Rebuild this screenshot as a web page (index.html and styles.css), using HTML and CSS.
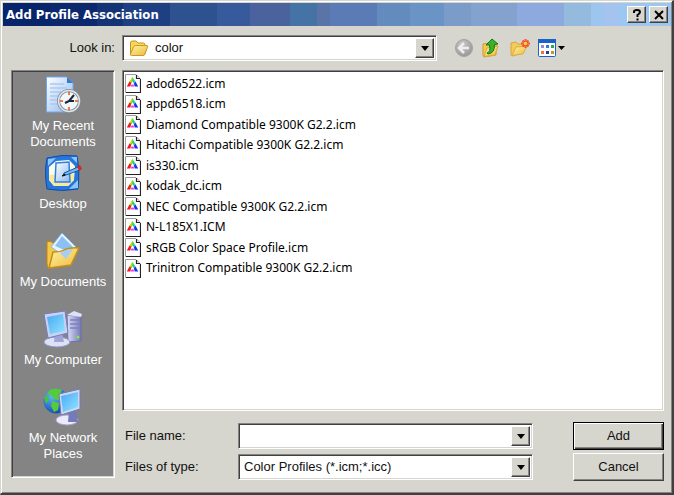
FILE: index.html
```html
<!DOCTYPE html>
<html lang="en">
<head>
<meta charset="utf-8">
<title>Add Profile Association</title>
<link rel="stylesheet" href="styles.css">
</head>
<body>
<svg class="defs" aria-hidden="true">
  <defs>
    <linearGradient id="gold" x1="0" y1="0" x2="1" y2="1"><stop offset="0" stop-color="#fff3a8"/><stop offset="1" stop-color="#eeb938"/></linearGradient>
    <linearGradient id="screen" x1="0" y1="0" x2="1" y2="1"><stop offset="0" stop-color="#4aa8f4"/><stop offset="1" stop-color="#8fe4ff"/></linearGradient>
    <linearGradient id="paper" x1="0" y1="0" x2="1" y2="1"><stop offset="0" stop-color="#ffffff"/><stop offset="1" stop-color="#8db9f0"/></linearGradient>
    <linearGradient id="case" x1="0" y1="0" x2="1" y2="0"><stop offset="0" stop-color="#dcdff8"/><stop offset="1" stop-color="#7479b8"/></linearGradient>
    <radialGradient id="globe" cx=".35" cy=".3" r=".8"><stop offset="0" stop-color="#62b8ff"/><stop offset="1" stop-color="#0a3fae"/></radialGradient>
    <radialGradient id="grey" cx=".4" cy=".3" r=".8"><stop offset="0" stop-color="#c9c9c9"/><stop offset="1" stop-color="#929292"/></radialGradient>
    <symbol id="profile" viewBox="0 0 16 19">
      <path d="M.5.5H11L15.500 5V18.500H.5z" fill="#fff" stroke="#9a9a9a"/>
      <path d="M11.500 1V4.500H15M15.500 5V18.500H1" fill="none" stroke="#222" stroke-width="1.200"/>
      <path d="M7.500 3L10.500 8L7.500 9L4.500 8z" fill="#12d832"/>
      <path d="M7.500 3L4.500 8L5.800 8.500L7.500 6z" fill="#e8d800"/>
      <path d="M4.500 7.500L7 9L5 12.500H1.800z" fill="#f01818"/>
      <path d="M10.500 7.500L13.200 12.500H10L8 9z" fill="#1830f0"/>
      <path d="M8 5L10.500 8L9 9z" fill="#18d8d0"/>
      <path d="M7.500 9L9.500 12.500H5.500z" fill="#e838e8"/>
      <path d="M7.500 7L9.500 10.500H5.500z" fill="#fff"/>
    </symbol>
  </defs>
</svg>
<main class="dialog">
  <header class="titlebar">
    <h1>Add Profile Association</h1>
    <button class="caption" type="button" aria-label="Help"><svg width="10" height="12" viewBox="0 0 10 12"><path d="M2 4V2.500Q2 1 5 1T8 3Q8 4.500 5.500 6V8M5.500 9.500V11.500" fill="none" stroke="#000" stroke-width="2"/></svg></button>
    <button class="caption close" type="button" aria-label="Close"><svg width="10" height="10" viewBox="0 0 10 10"><path d="M1 1L9 9M9 1L1 9" stroke="#000" stroke-width="2"/></svg></button>
  </header>

  <form class="content">
    <label class="lookin-label" for="lookin">Look in:</label>
    <div class="lookin-row">
      <div class="combo">
        <svg class="folder" width="20" height="17" viewBox="0 0 20 17"><path d="M1.500 14V3Q1.500 1 3.500 1H7L9 3H14.500Q16 3 16 5V14z" fill="#f8d75e" stroke="#c49322"/><path d="M2.500 15.500Q1 15.500 1.500 14L4.500 7Q5 5.500 6.500 5.500H18Q19 5.500 18.500 7L16 14Q15.500 15.500 14 15.500z" fill="url(#gold)" stroke="#c99a22"/></svg>
        <select id="lookin"><option>color</option></select>
        <span class="drop" aria-hidden="true"></span>
      </div>
      <div class="tools">
        <button class="tool" type="button" aria-label="Back"><svg width="20" height="20" viewBox="0 0 20 20"><circle cx="10" cy="10" r="8.500" fill="url(#grey)" stroke="#a2a2a2"/><path d="M10 5L5 10L10 15M5.500 10H15" fill="none" stroke="#eee" stroke-width="2.500"/></svg></button>
        <button class="tool" type="button" aria-label="Up one level"><svg width="20" height="20" viewBox="0 0 20 20"><path d="M1 17V6L6 5L8 7L14 6V17L2 19z" fill="#f4c94a" stroke="#cf9b2a"/><path d="M2 18.500L5 10L16 8L13 17z" fill="url(#gold)" stroke="#dba936"/><path d="M5 15Q9 14 7.500 7H4L10 1L16 6L12.500 6.500Q13 15 6 16z" fill="#38b22c" stroke="#16791a"/></svg></button>
        <button class="tool" type="button" aria-label="Create new folder"><svg width="20" height="20" viewBox="0 0 20 20"><path d="M1 17V5L6 4L8 6H14V14L3 18z" fill="#f4cb56" stroke="#d9a63c"/><path d="M2 17.500L6 9L17 8L13 16z" fill="url(#gold)" stroke="#dfad42"/><path d="M15.500 1V10M11 5.500H20M12.500 2.500L18.500 8.500M18.500 2.500L12.500 8.500" stroke="#f0582a" stroke-width="2"/><circle cx="15.500" cy="5.500" r="1.800" fill="#ffcd56"/></svg></button>
        <button class="tool" type="button" aria-label="View menu"><svg width="28" height="20" viewBox="0 0 28 20"><rect x=".5" y="1.500" width="17" height="17" rx="1" fill="#fff" stroke="#1763c8"/><path d="M0 1H18V5H0z" fill="#1763c8"/><path d="M3 7h3v3H3z" fill="#9b8ad0"/><path d="M8 7h3v3H8z" fill="#3978d4"/><path d="M13 7h3v3h-3z" fill="#3aa24d"/><path d="M3 13h3v3H3z" fill="#ef704a"/><path d="M8 13h3v3H8z" fill="#263e9a"/><path d="M13 13h3v3h-3z" fill="#c49a24"/><path d="M20 8H27L23.500 12z" fill="#000"/></svg></button>
      </div>
    </div>

    <nav class="places">
      <a href="#recent"><svg width="36" height="38" viewBox="0 0 36 38"><path d="M1.500 1H22L28 7V36H1.500z" fill="url(#paper)" stroke="#72a6ec"/><path d="M22 1V7H28z" fill="#2e7be0"/><path d="M5 8H19M5 12H22M5 16H16M5 20H13M5 24H12M5 28H13" stroke="#a9caf2" stroke-width="1.500"/><circle cx="24" cy="25" r="10.500" fill="#f2f7fb" stroke="#7e8896" stroke-width="3"/><circle cx="24" cy="25" r="10.500" fill="none" stroke="#dfe4ea" stroke-width="1.500"/><path d="M24 16V19M24 31V34M15 25H18M30 25H33" stroke="#ee7a3c" stroke-width="2"/><path d="M29 19L24 25L29 25M24 25L20 27" fill="none" stroke="#1b2636" stroke-width="2"/></svg><span>My Recent Documents</span></a>
      <a href="#desktop"><svg width="38" height="38" viewBox="0 0 38 38"><path d="M3 4Q18 0 33 2Q36 17 34 35Q18 38 3 35Q0 18 3 4z" fill="#2676dc" stroke="#0c4cae"/><path d="M4 5L12 4L4 12zM25 35L34 26V34zM27 3L33 3V9z" fill="#8ac6ff"/><path d="M12 7L25 6L31 12L30 26L24 32L10 32L5 26V13z" fill="#fdfcec"/><path d="M5 21L30 20V26L24 32H10L5 26z" fill="#f9e9a0"/><path d="M12 9L25 8L26 28L11 28z" fill="url(#paper)" stroke="#2f82da" stroke-width="1.500"/><path d="M20 19L34 13L36 16L22 21L19 22z" fill="#72bbf4" stroke="#17569e"/><path d="M33 12L36 11L38 15L35 17z" fill="#d5281c"/><path d="M18 22L21 20V21z" stroke="#111"/></svg><span>Desktop</span></a>
      <a href="#documents"><svg width="36" height="38" viewBox="0 0 36 38"><path d="M2 10Q5 8 8 11L13 12L31 15L26 33L4 36Q2 35 2 32z" fill="#f6c944" stroke="#be8712"/><path d="M17 1L31 15L24 27L6 15z" fill="#e8f4ff" stroke="#83b9ed"/><path d="M17 4L28 15L24 20L10 14z" fill="#8cbff3"/><path d="M4 36L8 20Q16 20 19 18Q26 15 34 16L26 33z" fill="url(#gold)" stroke="#c48e18" stroke-width="1.500"/><path d="M15 21L21 27L28 17Q21 17 19 19z" fill="#a6cdf2"/></svg><span>My Documents</span></a>
      <a href="#computer"><svg width="40" height="38" viewBox="0 0 40 38"><path d="M24 5L38 6V31L25 32z" fill="url(#case)" stroke="#6b70aa"/><path d="M24 5L31 1L39 4L38 7z" fill="#dee1fa"/><path d="M27 10L36 10M27 14L36 14M27 18H36" stroke="#7c82ba" stroke-width="1.500"/><circle cx="35" cy="27" r="1.500" fill="#83ec3f"/><ellipse cx="14" cy="32" rx="13" ry="5" fill="#dce1f6" stroke="#8f97cb"/><path d="M12 23H19L21 32H11z" fill="#9da5da"/><path d="M1 4L22 1L25 23L5 28z" fill="#cbd1f4" stroke="#777eb8"/><path d="M4 7L20 4L22 21L7 24z" fill="url(#screen)"/></svg><span>My Computer</span></a>
      <a href="#network"><svg width="40" height="38" viewBox="0 0 40 38"><circle cx="13" cy="13" r="12.500" fill="url(#globe)"/><path d="M7 2Q13-1 19 2L17 6L20 10L15 12L11 11L8 7L4 6zM9 13L16 15L15 22L11 24L8 18z" fill="#54cc38"/><path d="M1 9L5 7L6 12L3 16z" fill="#4ac03b"/><ellipse cx="24" cy="32" rx="11" ry="5" fill="#eceafa" stroke="#a4a3d0"/><path d="M26 23H33L35 34H25z" fill="#747bb9"/><path d="M16 6L37 1V21L18 27z" fill="#cfd8f7" stroke="#737bad"/><path d="M18 8L35 4V19L20 24z" fill="url(#screen)"/></svg><span>My Network Places</span></a>
    </nav>

    <ul class="files">
      <li><svg><use href="#profile"/></svg>adod6522.icm</li>
      <li><svg><use href="#profile"/></svg>appd6518.icm</li>
      <li><svg><use href="#profile"/></svg>Diamond Compatible 9300K G2.2.icm</li>
      <li><svg><use href="#profile"/></svg>Hitachi Compatible 9300K G2.2.icm</li>
      <li><svg><use href="#profile"/></svg>is330.icm</li>
      <li><svg><use href="#profile"/></svg>kodak_dc.icm</li>
      <li><svg><use href="#profile"/></svg>NEC Compatible 9300K G2.2.icm</li>
      <li><svg><use href="#profile"/></svg>N-L185X1.ICM</li>
      <li><svg><use href="#profile"/></svg>sRGB Color Space Profile.icm</li>
      <li><svg><use href="#profile"/></svg>Trinitron Compatible 9300K G2.2.icm</li>
    </ul>

    <div class="fields">
      <label for="filename">File name:</label>
      <div class="combo">
        <input id="filename" type="text">
        <button class="drop" type="button" aria-label="Recent file names"></button>
      </div>
      <button class="push default" type="submit">Add</button>
      <label for="filetype">Files of type:</label>
      <div class="combo">
        <select id="filetype"><option>Color Profiles (*.icm;*.icc)</option></select>
        <span class="drop" aria-hidden="true"></span>
      </div>
      <button class="push" type="button">Cancel</button>
    </div>
  </form>
</main>
</body>
</html>
```
FILE: styles.css
```css
* { box-sizing: border-box; }

body {
  margin: 0;
  font: 13px/16px "Liberation Sans", Arial, sans-serif;
  color: #111;
  background: #d6d6ce;
}

button, input, select { font: inherit; color: inherit; border-radius: 0; }
.defs { position: absolute; width: 0; height: 0; }

.dialog {
  display: flex;
  flex-direction: column;
  min-height: 100vh;
  padding: 2px 1px 1px 2px;
  border: 1px solid #d6d6ce;
  border-right: 2px solid #404040;
  border-bottom: 2px solid #404040;
  box-shadow: inset 1px 1px #fff, inset -1px -1px #848484;
}

.titlebar {
  display: flex;
  align-items: center;
  height: 23px;
  padding: 0 3px;
  background: linear-gradient(90deg,
    #08246b 7%, #0c296d 7% 14%, #153476 14% 18%, #1e4083 18% 25%,
    #2d528f 25% 32%, #365a9c 32% 37%, #4b61a0 37% 38%, #4a639c 38% 43%,
    #4673a5 43% 47%, #5b74a8 47% 49%, #5a7bb5 49% 56%, #638bbd 56% 61%,
    #6b94c6 61% 66%, #7b9bc8 66% 70%, #84a2ce 70% 77%, #8caade 77% 84%,
    #94bade 84% 88%, #9cc6f0 88% 90%, #a5c3ef 90% 92%, #9cc7f3 92%);
}

.titlebar h1 {
  flex: 1;
  margin: 0;
  font: bold 13px/18px "DejaVu Sans Condensed", Tahoma, sans-serif;
  color: #fff;
}

.caption, .drop, .push {
  background: #d6d6ce;
  border: 1px solid;
  border-color: #fff #404040 #404040 #fff;
  box-shadow: inset -1px -1px #848484;
}

.caption {
  display: grid;
  place-items: center;
  width: 19px;
  height: 17px;
  padding: 0;
}
.close { margin-left: 3px; }

.content {
  flex: 1;
  display: grid;
  grid-template: 26px 1fr auto / 104px 1fr;
  gap: 9px 7px;
  padding: 9px 7px 11px 8px;
}

.lookin-label { align-self: center; justify-self: end; }
.lookin-row { display: flex; gap: 17px; }
.lookin-row .combo { flex: 1; }

.combo {
  display: flex;
  min-width: 0;
  height: 26px;
  background: #fff;
  border: 1px solid;
  border-color: #848484 #fff #fff #848484;
  box-shadow: inset 1px 1px #404040, inset -1px -1px #d6d6ce;
  padding: 2px;
}
.combo select, .combo input {
  flex: 1;
  min-width: 0;
  appearance: none;
  border: 0;
  padding: 0 3px;
  background: none;
  outline: 0;
}
.combo .folder { margin: 2px 3px 0 4px; }
.drop {
  display: grid;
  place-items: center;
  width: 19px;
  padding: 0;
}
.drop::before {
  content: "";
  border: 4px solid transparent;
  border-top: 5px solid #000;
  border-bottom: 0;
}

.tools { display: flex; align-items: center; gap: 8px; width: 210px; }
.tool { display: grid; padding: 0; border: 0; background: none; }

.places {
  grid-row: 2 / 4;
  display: grid;
  grid-auto-rows: 78px;
  align-content: start;
  margin-bottom: 3px;
  padding: 5px 6px 0;
  background: #848484;
  border: 1px solid;
  border-color: #848484 #fff #fff #848484;
  box-shadow: inset 1px 1px #404040, inset -1px -1px #d6d6ce;
}
.places a {
  display: flex;
  flex-direction: column;
  align-items: center;
  gap: 4px;
  color: #fff;
  text-align: center;
  text-decoration: none;
}

.files {
  display: grid;
  grid-auto-rows: 21px 20px;
  align-content: start;
  margin: 0;
  padding: 2px;
  font: 12px/18px "Noto Sans", Tahoma, sans-serif;
  color: #000;
  list-style: none;
  background: #fff;
  border: 1px solid;
  border-color: #848484 #fff #fff #848484;
  box-shadow: inset 1px 1px #404040, inset -1px -1px #d6d6ce;
}
.files li { display: flex; align-items: center; gap: 5px; }
.files svg { width: 16px; height: 19px; }

.fields {
  display: grid;
  grid-template-columns: 109px 1fr 91px;
  align-items: center;
  gap: 3px 0;
  padding: 2px 0 0 3px;
}
.fields .combo { margin: 0 40px 0 4px; }
.push { height: 28px; padding: 0; }
.default { outline: 1px solid #000; outline-offset: -1px; border-color: #000; box-shadow: inset 1px 1px #fff, inset -1px -1px #404040, inset -2px -2px #848484; }
```
